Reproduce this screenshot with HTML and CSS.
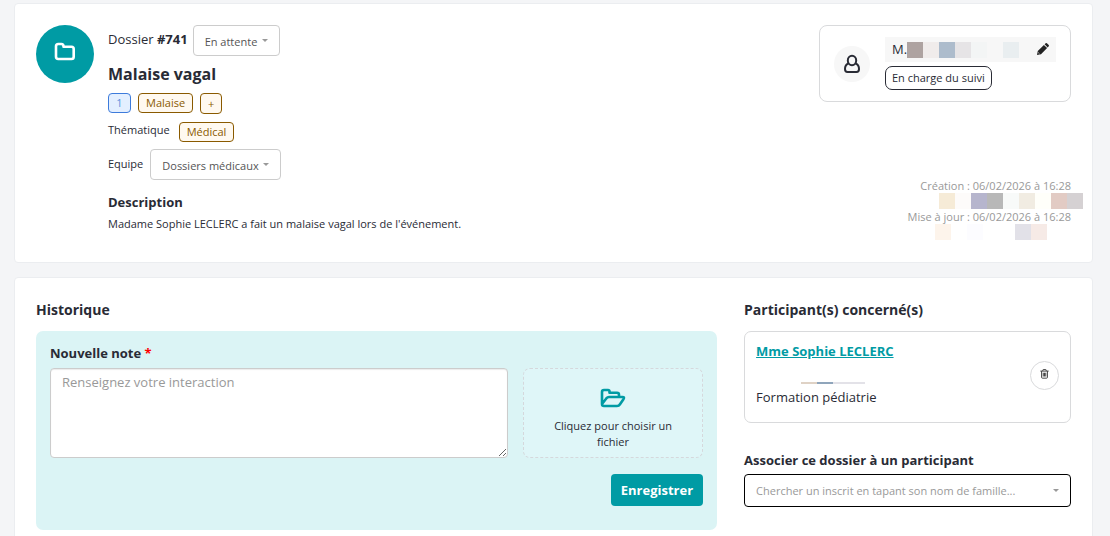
FILE: index.html
```html
<!DOCTYPE html>
<html lang="fr">
<head>
    <meta charset="UTF-8">
    <meta name="viewport" content="width=device-width, initial-scale=1.0">
    <title>Dossier #741</title>
    <link rel="stylesheet" href="styles.css">
</head>
<body>
    <section class="card dossier">
        <div class="dossier-icon">
            <svg width="22" height="20" viewBox="0 0 22 20" fill="none" stroke="#fff" stroke-width="2.6" stroke-linejoin="round">
                <path d="M2 4.2Q2 2 4.200 2H7.300Q9.500 2 9.500 4.200V4.800H17.500Q19.700 4.800 19.700 7V14.800Q19.700 17 17.500 17H4.200Q2 17 2 14.800Z"/>
            </svg>
        </div>

        <div class="dossier-info">
            <div class="row row-status">
                <label class="dossier-number" for="status">Dossier <strong>#741</strong></label>
                <span class="select">
                    <select id="status"><option>En attente</option></select>
                </span>
            </div>
            <h1>Malaise vagal</h1>
            <div class="row tags">
                <span class="tag tag-blue">1</span>
                <span class="tag">Malaise</span>
                <button type="button" class="tag tag-add">+</button>
            </div>
            <div class="row row-theme">
                <span>Thématique</span>
                <span class="tag">Médical</span>
            </div>
            <div class="row row-team">
                <label for="team">Equipe</label>
                <span class="select">
                    <select id="team"><option>Dossiers médicaux</option></select>
                </span>
            </div>
            <h2 class="description-title">Description</h2>
            <p class="description">Madame Sophie LECLERC a fait un malaise vagal lors de l'événement.</p>
        </div>

        <div class="dossier-side">
            <div class="owner">
                <div class="owner-avatar">
                    <svg width="18" height="20" viewBox="0 0 18 20" fill="none" stroke="#292b35" stroke-width="2">
                        <ellipse cx="9" cy="6.500" rx="4.200" ry="4.700"/>
                        <path d="M5.200 9.800C3 10.500 2 12.500 2 15C2 17 3 18 4.500 18H13.500C15 18 16 17 16 15C16 12.500 15 10.500 12.800 9.800"/>
                    </svg>
                </div>
                <div class="owner-info">
                    <div class="owner-name">
                        <span class="owner-title">M.</span>
                        <span class="mask mask-name"></span>
                        <button type="button" class="edit" aria-label="Modifier">
                            <svg width="12" height="12" viewBox="0 0 12 12">
                                <path fill="#222" d="M0 12L.8 8L6.900 1.900L10.100 5.100L4 11.200ZM7.600 1.300L8.700.3Q9.300-.2 9.900.3L11.700 2.100Q12.200 2.700 11.700 3.300L10.700 4.400Z"/>
                                <path stroke="#f7f7f7" stroke-width=".7" d="M1.200 9.500L2.500 10.800"/>
                            </svg>
                        </button>
                    </div>
                    <span class="owner-role">En charge du suivi</span>
                </div>
            </div>
            <div class="dates">
                <div>Création : 06/02/2026 à 16:28</div>
                <div class="mask mask-created"></div>
                <div>Mise à jour : 06/02/2026 à 16:28</div>
                <div class="mask mask-updated"></div>
            </div>
        </div>
    </section>

    <section class="card details">
        <div class="history">
            <h2>Historique</h2>
            <form class="note">
                <label class="note-label" for="note">Nouvelle note <span class="required">*</span></label>
                <div class="note-fields">
                    <textarea id="note" placeholder="Renseignez votre interaction"></textarea>
                    <button type="button" class="upload">
                        <svg width="26" height="20" viewBox="0 0 26 20" fill="none" stroke="#009ba4" stroke-width="2.600" stroke-linejoin="round">
                            <path d="M2 16V4Q2 2 4 2H8Q9.500 2 9.500 3.500V4.800H17Q19 4.800 19 6.800V9M2 16L6.500 10.200Q7.500 9 9 9H22.500Q24.800 9 23.600 10.900L20 16.200Q18.900 18 17 18H4Q2 18 2 16Z"/>
                        </svg>
                        <span>Cliquez pour choisir un fichier</span>
                    </button>
                </div>
                <button type="button" class="save">Enregistrer</button>
            </form>
        </div>

        <div class="participants">
            <h2>Participant(s) concerné(s)</h2>
            <div class="participant">
                <div class="participant-info">
                    <a href="#">Mme Sophie LECLERC</a>
                    <div class="mask mask-participant"></div>
                    <div>Formation pédiatrie</div>
                </div>
                <button type="button" class="remove" aria-label="Supprimer">
                    <svg width="9" height="10" viewBox="0 0 10 12" fill="none" stroke="#333" stroke-width="1.1">
                        <path d="M0 2.500H10M3 2.500V1.500Q3 .5 4 .5H6Q7 .5 7 1.500V2.500M1.500 2.500V10Q1.500 11 2.500 11H7.500Q8.500 11 8.500 10V2.500M3.500 4.500V9M5 4.500V9M6.500 4.500V9"/>
                    </svg>
                </button>
            </div>
            <label class="search-label" for="search">Associer ce dossier à un participant</label>
            <span class="select select-search">
                <select id="search"><option>Chercher un inscrit en tapant son nom de famille...</option></select>
            </span>
        </div>
    </section>
</body>
</html>
```

FILE: styles.css
```css
* {
    box-sizing: border-box;
}

body {
    margin: 0;
    padding: 3px 17px 0 14px;
    background: #f4f5f7;
    color: #292b35;
    font-family: "Open Sans", sans-serif;
    font-size: 13px;
    line-height: 18px;
}

button, select, textarea {
    font-family: inherit;
    color: inherit;
}

button {
    cursor: pointer;
}

svg {
    display: block;
}

h1, h2, p {
    margin: 0;
}

h1 {
    font-size: 16px;
    line-height: 22px;
}

h2 {
    font-size: 14px;
    line-height: 22px;
}

.card {
    background: #fff;
    border: 1px solid #ebedf0;
    border-radius: 4px;
    padding: 21px;
    margin-bottom: 14px;
}

/* Dossier */
.dossier {
    display: flex;
    gap: 14px;
}

.dossier-icon {
    display: flex;
    align-items: center;
    justify-content: center;
    flex: none;
    width: 58px;
    height: 58px;
    padding-bottom: 4px;
    border-radius: 50%;
    background: #009ba4;
}

.dossier-info {
    flex: 1;
    padding-bottom: 9px;
    font-size: 11px;
    line-height: 16px;
}

.row {
    display: flex;
    align-items: center;
}

.row-status {
    gap: 5px;
    margin-bottom: 7px;
}

.dossier-number {
    font-size: 13px;
    padding-bottom: 4px;
}

.tags {
    align-items: flex-start;
    gap: 7px;
    margin: 8px 0;
}

.tag {
    padding: 0 7px;
    border: 1px solid #8a5a00;
    border-radius: 4px;
    background: #fff9f0;
    color: #8a5a00;
    font-size: 11px;
    line-height: 18px;
}

.tag-blue {
    min-width: 23px;
    border-color: #3d7bdb;
    background: #e3efff;
    color: #5b8fdc;
    text-align: center;
}

.tag-add {
    line-height: 19px;
}

.row-theme {
    align-items: flex-start;
    gap: 9px;
    margin-bottom: 7px;
}

.row-team {
    gap: 7px;
    margin-bottom: 11px;
}

.row-team label {
    padding-bottom: 2px;
}

.select {
    position: relative;
    display: inline-block;
}

.select::after {
    content: "";
    position: absolute;
    right: 12px;
    top: 14px;
    border: 3px solid transparent;
    border-top-color: #999;
    border-bottom: 0;
    pointer-events: none;
}

.select select {
    display: block;
    height: 31px;
    padding: 2px 21px 0 11px;
    border: 1px solid #ccc;
    border-radius: 4px;
    background: #fff;
    color: #555;
    font-size: 11px;
    appearance: none;
}

.description-title {
    font-size: 13px;
}

.description {
    margin-top: 3px;
}

.dossier-side {
    display: flex;
    flex-direction: column;
    justify-content: space-between;
    align-items: flex-end;
}

.owner {
    display: flex;
    align-items: center;
    gap: 15px;
    padding: 11px 14px;
    border: 1px solid #d9dadc;
    border-radius: 8px;
}

.owner-avatar {
    display: flex;
    align-items: center;
    justify-content: center;
    width: 36px;
    height: 36px;
    border-radius: 50%;
    background: #f7f7f7;
}

.owner-name {
    display: flex;
    align-items: center;
    min-width: 171px;
    height: 25px;
    padding: 0 7px;
    margin-bottom: 4px;
    background: #f7f7f7;
}

.owner-title {
    padding-bottom: 2px;
}

.edit {
    margin-left: auto;
    padding: 0 0 2px;
    border: 0;
    background: none;
}

.owner-role {
    display: inline-block;
    padding: 3px 6px;
    border: 1px solid #292b35;
    border-radius: 7px;
    font-size: 11px;
    line-height: 16px;
}

.dates {
    padding-bottom: 1px;
    color: #999;
    font-size: 11px;
    line-height: 15px;
    text-align: right;
}

/* Masked names */
.mask {
    height: 16px;
}

.mask-name {
    width: 112px;
    background: linear-gradient(to right,
        #aea3a1 0 16px, #f0eceb 16px 32px, #adbccc 32px 48px, #e6e4e6 48px 64px,
        #f3f5f5 64px 80px, #f7f7f7 80px 96px, #e9eef0 96px);
}

.mask-created {
    width: 144px;
    margin-left: auto;
    margin-right: -12px;
    background: linear-gradient(to right,
        #f6ebd7 0 16px, #fdfbfa 16px 32px, #b6b5cd 32px 48px, #b8b8b8 48px 64px,
        #f8faf9 64px 80px, #f1ece2 80px 96px, #fffffa 96px 112px, #e2cbc4 112px 128px, #d5d1d3 128px);
}

.mask-updated {
    width: 112px;
    margin-left: auto;
    margin-right: 24px;
    background: linear-gradient(to right,
        #fdf4eb 0 16px, #fff 16px 32px, #fcfcff 32px 48px, #fff 48px 80px,
        #e2e1e8 80px 96px, #f6eae6 96px);
}

.mask-participant {
    width: 64px;
    height: 2px;
    margin: 22px 0 4px 45px;
    background: linear-gradient(to right, #dfd2c5 0 16px, #8fa5bb 16px 32px, #e3e2e8 32px);
}

/* Historique et participants */
.details {
    display: grid;
    grid-template-columns: 25fr 12fr;
    gap: 27px;
    margin-bottom: 0;
}

.details h2 {
    margin-bottom: 10px;
}

.note {
    display: flex;
    flex-direction: column;
    padding: 13px 14px 24px;
    border-radius: 7px;
    background: #dbf4f5;
}

.note-label {
    margin-bottom: 6px;
    font-weight: bold;
}

.required {
    color: #f00;
}

.note-fields {
    display: grid;
    grid-template-columns: 28fr 11fr;
    gap: 15px;
    margin-bottom: 16px;
}

textarea {
    height: 90px;
    padding: 4px 11px;
    border: 1px solid #ccc;
    border-radius: 4px;
    background: #fff;
    box-shadow: inset 0 1px 1px rgba(0, 0, 0, 0.08);
    font-size: 13px;
    line-height: 18px;
}

textarea::placeholder {
    color: #999;
}

.upload {
    display: flex;
    flex-direction: column;
    align-items: center;
    justify-content: center;
    gap: 10px;
    padding: 11px 28px 0;
    border: 1px dashed #d5d8dc;
    border-radius: 7px;
    background: #dff6f8;
    font-size: 11px;
    line-height: 16px;
}

.save {
    align-self: flex-end;
    height: 32px;
    padding: 0 10px;
    border: 0;
    border-radius: 4px;
    background: #009ba4;
    color: #fff;
    font-size: 13px;
    font-weight: bold;
}

.participant {
    display: flex;
    align-items: center;
    justify-content: space-between;
    height: 92px;
    padding: 0 11px;
    margin-bottom: 28px;
    border: 1px solid #d9dadc;
    border-radius: 7px;
}

.participant-info {
    padding-bottom: 6px;
}

.participant a {
    color: #009ba4;
    font-weight: bold;
}

.remove {
    display: flex;
    align-items: center;
    justify-content: center;
    width: 29px;
    height: 29px;
    padding: 0 0 2px;
    margin-top: -4px;
    border: 1px solid #d9dadc;
    border-radius: 50%;
    background: #fff;
}

.search-label {
    display: block;
    margin-bottom: 5px;
    font-size: 13px;
    font-weight: bold;
}

.select-search {
    display: block;
}

.select-search select {
    width: 100%;
    height: 33px;
    padding-top: 0;
    border-color: #000;
    color: #999;
}

.select-search::after {
    top: 15px;
}
```
